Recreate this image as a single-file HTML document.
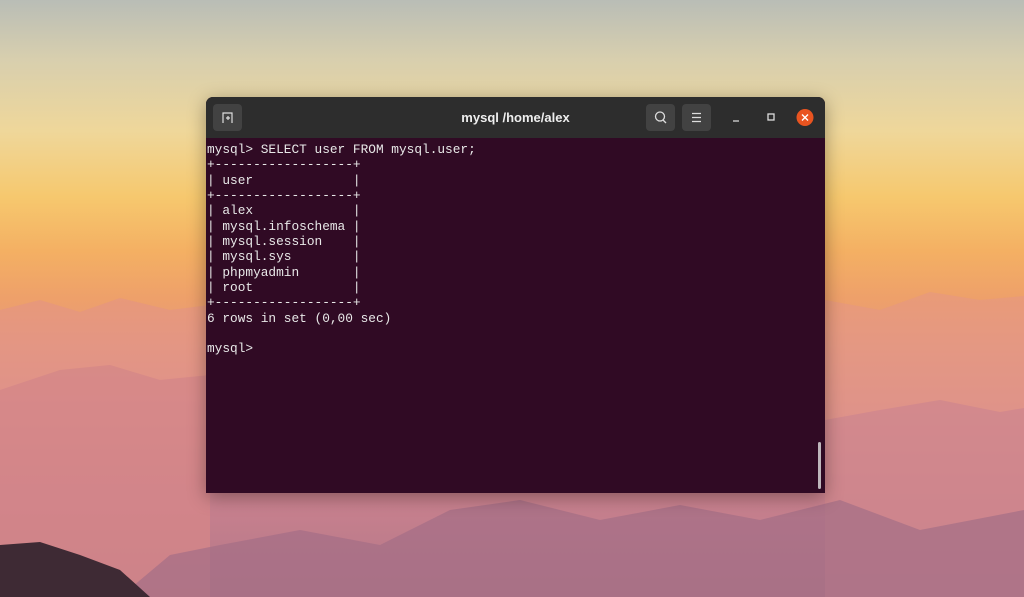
<!DOCTYPE html>
<html><head><meta charset="utf-8"><style>
body{margin:0;width:1024px;height:597px;overflow:hidden;position:relative;
background:linear-gradient(180deg,#b9bdb6 0%,#d8cfae 10%,#efd79a 22%,#f6c86e 33%,#f4b063 42%,#eea06a 50%,#e59a7e 58%,#d98f8c 70%,#c7808e 85%,#b27787 100%);}
svg.bg{position:absolute;left:0;top:0}
.win{position:absolute;left:206px;top:97px;width:619px;height:396px;background:#300a24;border-radius:7px 7px 0 0;overflow:hidden;box-shadow:0 4px 18px rgba(0,0,0,.35)}
.hd{height:41px;background:#2d2d2d;position:relative;color:#eee;font:bold 13px "Liberation Sans",sans-serif}
.ttl{position:absolute;left:0;right:0;top:13px;text-align:center}
.btn{position:absolute;top:7px;width:29px;height:27px;background:#424242;border-radius:4px}
pre{margin:0;padding:4px 0 0 1px;color:#e8e8e8;font:12.8px/15.35px "Liberation Mono",monospace}
.sb{position:absolute;right:4px;top:345px;width:3px;height:47px;background:#bdb6bb;border-radius:2px}
</style></head><body>
<svg class="bg" width="1024" height="597">
<path d="M0 310 L40 300 L80 312 L120 298 L170 310 L210 305 L210 597 L0 597Z" fill="#e2928a" opacity=".5"/>
<path d="M0 390 L60 370 L110 365 L160 380 L210 375 L210 597 L0 597Z" fill="#cf8289" opacity=".55"/>
<path d="M825 300 L880 310 L930 292 L980 300 L1024 296 L1024 597 L825 597Z" fill="#e39588" opacity=".5"/>
<path d="M825 420 L880 410 L940 400 L1000 412 L1024 408 L1024 597 L825 597Z" fill="#c98190" opacity=".55"/>
<path d="M120 597 L170 555 L220 545 L300 530 L380 545 L450 510 L520 500 L600 520 L680 505 L760 520 L840 500 L920 530 L1024 510 L1024 597Z" fill="#a46d86" opacity=".7"/>
<path d="M0 545 L40 542 L80 555 L120 570 L150 597 L0 597Z" fill="#3e2a34"/>
</svg>
<div class="win">
<div class="hd">
<div class="btn" style="left:7px"><svg width="29" height="27"><path d="M10 19V9h9v10M13 14h4M15 12v4" stroke="#ddd" fill="none" stroke-width="1.2"/></svg></div>
<div class="ttl">mysql /home/alex</div>
<div class="btn" style="left:440px"><svg width="29" height="27"><circle cx="14" cy="12.5" r="4.5" stroke="#ddd" fill="none" stroke-width="1.3"/><path d="M17 16l3 3" stroke="#ddd" stroke-width="1.3"/></svg></div>
<div class="btn" style="left:476px"><svg width="29" height="27"><path d="M10 9.5h9M10 13.5h9M10 17.5h9" stroke="#ddd" stroke-width="1.2"/></svg></div>
<svg style="position:absolute;left:520px;top:10px" width="90" height="22"><path d="M7 14h6" stroke="#ddd" stroke-width="1.3"/><rect x="42" y="7" width="6" height="6" stroke="#ddd" fill="none" stroke-width="1.3"/><circle cx="79" cy="10.5" r="8.5" fill="#e95420"/><path d="M76 7.5l6 6M82 7.5l-6 6" stroke="#fff" stroke-width="1.4"/></svg>
</div>
<pre>mysql&gt; SELECT user FROM mysql.user;
+------------------+
| user             |
+------------------+
| alex             |
| mysql.infoschema |
| mysql.session    |
| mysql.sys        |
| phpmyadmin       |
| root             |
+------------------+
6 rows in set (0,00 sec)

mysql&gt; </pre>
<div class="sb"></div>
</div>
</body></html>
